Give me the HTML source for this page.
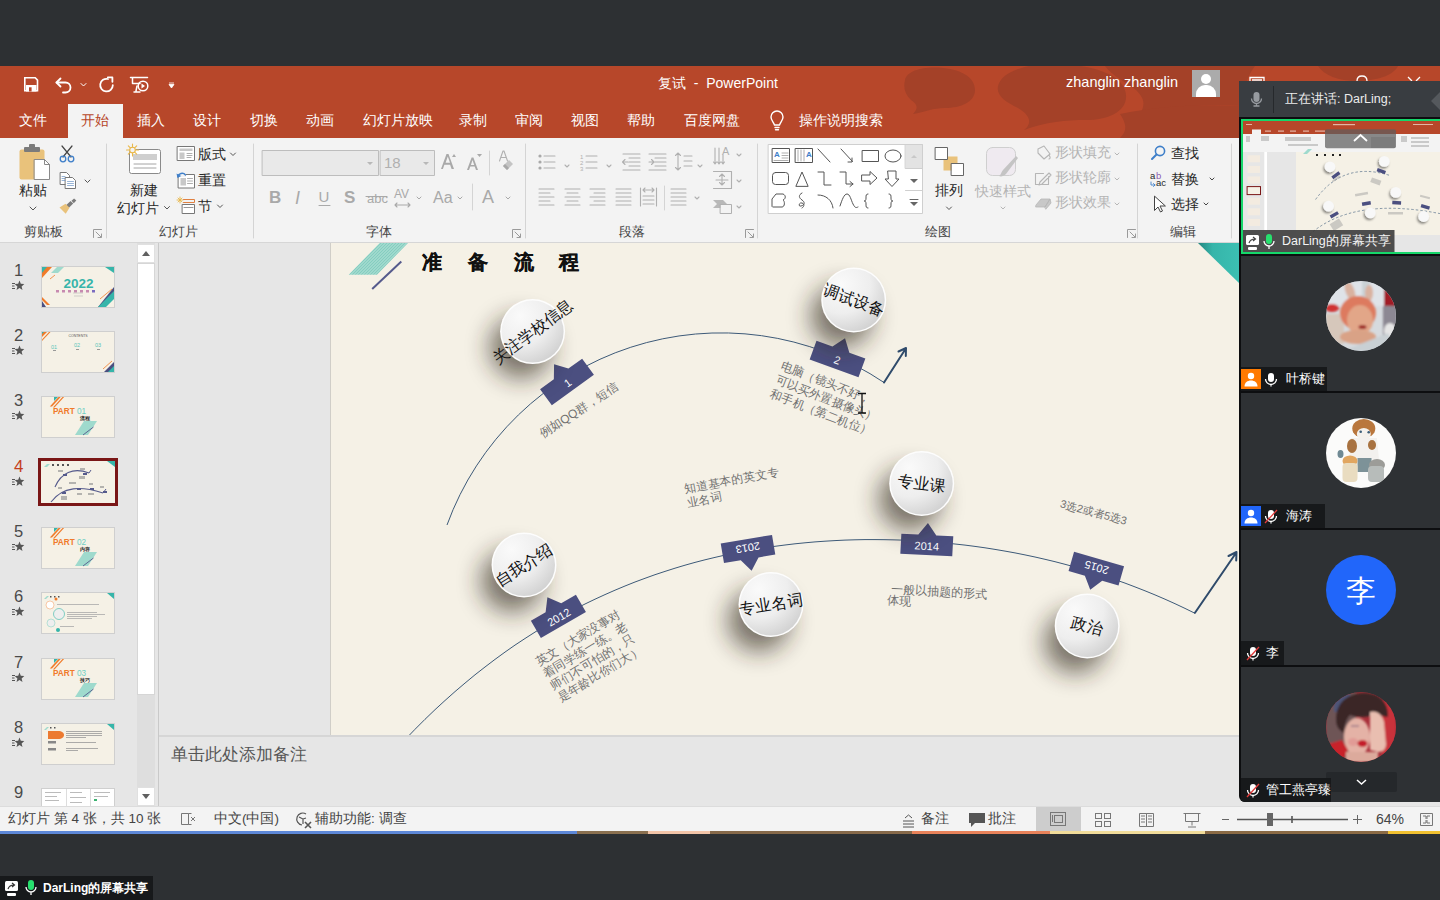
<!DOCTYPE html>
<html><head><meta charset="utf-8">
<style>
*{margin:0;padding:0;box-sizing:border-box}
html,body{width:1440px;height:900px;overflow:hidden;background:#2d3033;font-family:"Liberation Sans",sans-serif;position:relative}
.a{position:absolute}
.t{position:absolute;white-space:nowrap;line-height:1}
#title{left:0;top:66px;width:1440px;height:38px;overflow:hidden}
#tabs{left:0;top:103px;width:1440px;height:35px}
#ribbon{left:0;top:138px;width:1440px;height:105px;background:#f3f3f3;border-bottom:1px solid #d6d6d6}
#main{left:0;top:243px;width:1440px;height:563px;background:#e6e6e6;overflow:hidden}
#status{left:0;top:806px;width:1440px;height:25px;background:#f3f3f3;border-top:1px solid #dcdcdc}
.tab{position:absolute;top:10px;color:#fff;font-size:14px;line-height:1;white-space:nowrap}
.sep{position:absolute;width:1px;background:#d8d8d8}
.glab{position:absolute;top:88px;font-size:13px;color:#444;line-height:1;white-space:nowrap}
.dis{color:#b4b4b4}
</style></head><body>
<!-- TITLE BAR -->
<div class="a" style="left:0;top:66px;width:1440px;height:72px;background:#b7472a;overflow:hidden">
 <svg width="1440" height="72" viewBox="0 66 1440 72"><g fill="#9e3f28" opacity="0.75">
  <path d="M905 80c2-10 20-14 38-12 20 2 32 10 32 22 0 12-14 18-30 18-12 0-20 4-32 6 6-6 4-10-2-14-6-6-8-12-6-20z"/>
  <path d="M998 86c4-16 34-24 64-22 34 2 66 12 64 34-1 14-18 22-40 22-20 0-40 2-62 10 10-8 4-16-6-22-12-6-22-12-20-22z"/>
  <path d="M1105 66h150c-6 8-12 20-14 40-30-2-71 0-101 8 6-10 4-16-4-24-10-8-24-14-31-24z"/><path d="M1318 66h80c-4 8-16 14-40 15-20 0-34-6-40-15z"/>
  <path d="M1120 114c40-8 80-10 120-8v32h-120c6-6 8-12 0-24z"/>
 </g></svg>
</div>

<div id="title" class="a">
  <svg class="a" style="left:0;top:0" width="1440" height="38" viewBox="0 66 1440 38">
   
   <path d="M24.8 77.8h10.4l2.3 2.3v10.6h-12.7z" fill="none" stroke="#fff" stroke-width="1.6"/>
   <rect x="26" y="85" width="10.5" height="6.5" fill="#fff"/>
   <rect x="29" y="87.3" width="2.6" height="4.2" fill="#b7472a"/>
   <g fill="none" stroke="#fff" stroke-width="1.8" stroke-linecap="round" stroke-linejoin="round">
    <path d="M56.5 82.5h9a5 5 0 0 1 0 10h-2.5"/><path d="M60.5 78.5l-4 4 4 4"/>
    <path d="M81 83.5l2.5 2.5 2.5-2.5" stroke-width="1"/>
    <path d="M112.8 85.2A6.3 6.3 0 1 1 108 79"/><path d="M107.8 77.4h4.6v4.4" />
    <path d="M130.5 77.5h17M132.5 77.5v6M133 83.5h7M137 86l-1 5M134 92h6" stroke-width="1.5"/>
    <circle cx="143" cy="86" r="4.8" stroke-width="1.5"/>
   </g>
   <path d="M141.5 83.5v5l3.5-2.5z" fill="#fff"/>
   <path d="M169 83h5M169 84.5h5l-2.5 3.5z" fill="#fff" stroke="#fff" stroke-width="0.8"/>
   <!-- window controls peeking -->
   <g stroke="#fff" stroke-width="1.3" fill="none">
    <path d="M1250 81v-3.5h14v3.5M1252 80h10"/>
    <path d="M1357 81c0-3 2-5 5-5s5 2 5 5"/>
    <path d="M1408 77l4 4M1420 77l-4 4"/>
   </g>
  </svg>
  <div class="t" style="left:658px;top:10px;color:#fff;font-size:14px">复试&nbsp;&nbsp;-&nbsp;&nbsp;PowerPoint</div>
  <div class="t" style="left:1066px;top:9px;color:#fff;font-size:14.5px">zhanglin zhanglin</div>
  <div class="a" style="left:1192px;top:4px;width:28px;height:27px;background:#ababab;overflow:hidden">
    <div class="a" style="left:9px;top:4px;width:10px;height:10px;border-radius:50%;background:#fff"></div>
    <div class="a" style="left:4px;top:15px;width:20px;height:16px;border-radius:9px 9px 0 0;background:#fff"></div>
  </div>
</div>
<!-- TABS -->
<div id="tabs" class="a">
  <svg class="a" style="left:0;top:0" width="1440" height="35" viewBox="0 103 1440 35">
   
   <g fill="none" stroke="#fff" stroke-width="1.4" stroke-linecap="round">
    <path d="M774.5 125c-1-3-3.5-4.5-3.5-8a6 6 0 0 1 12 0c0 3.5-2.5 5-3.5 8z"/>
    <path d="M775 127.5h4M775.5 129.8h3"/>
   </g>
  </svg>
  <div class="tab" style="left:19px">文件</div>
  <div class="a" style="left:68px;top:1px;width:55px;height:34px;background:#f3f3f3"></div>
  <div class="tab" style="left:81px;color:#b7472a">开始</div>
  <div class="tab" style="left:137px">插入</div>
  <div class="tab" style="left:193px">设计</div>
  <div class="tab" style="left:250px">切换</div>
  <div class="tab" style="left:306px">动画</div>
  <div class="tab" style="left:363px">幻灯片放映</div>
  <div class="tab" style="left:459px">录制</div>
  <div class="tab" style="left:515px">审阅</div>
  <div class="tab" style="left:571px">视图</div>
  <div class="tab" style="left:627px">帮助</div>
  <div class="tab" style="left:684px">百度网盘</div>
  <div class="tab" style="left:799px">操作说明搜索</div>
</div>
<!-- RIBBON -->
<div id="ribbon" class="a">
<svg class="a" style="left:0;top:0" width="1440" height="104" viewBox="0 138 1440 104" fill="none" stroke-linecap="round" stroke-linejoin="round">
 <!-- separators -->
 <g stroke="#d4d4d4" stroke-width="1">
  <line x1="106.5" y1="144" x2="106.5" y2="238"/><line x1="253.5" y1="144" x2="253.5" y2="238"/>
  <line x1="525.5" y1="144" x2="525.5" y2="238"/><line x1="757.5" y1="144" x2="757.5" y2="238"/>
  <line x1="1137.5" y1="144" x2="1137.5" y2="238"/><line x1="1231.5" y1="144" x2="1231.5" y2="238"/>
  <line x1="489.5" y1="151" x2="489.5" y2="175"/><line x1="472.5" y1="184" x2="472.5" y2="210"/>
  <line x1="664.5" y1="186" x2="664.5" y2="210"/>
 </g>
 <!-- dialog launchers -->
 <g stroke="#9a9a9a" stroke-width="1">
  <path d="M93.5 237.5v-8h8M96 232l5 5M101.5 234v3.5h-3.5"/>
  <path d="M512.5 237.5v-8h8M515 232l5 5M520.5 234v3.5h-3.5"/>
  <path d="M745.5 237.5v-8h8M748 232l5 5M753.5 234v3.5h-3.5"/>
  <path d="M1127.5 237.5v-8h8M1130 232l5 5M1135.5 234v3.5h-3.5"/>
 </g>
 <!-- paste -->
 <rect x="19.5" y="149.5" width="25" height="30" rx="2" fill="#e9c27b" stroke="none"/>
 <rect x="24" y="147" width="16" height="5" rx="1" fill="#7b7b7b"/>
 <rect x="29" y="144" width="6" height="5" rx="1" fill="#7b7b7b"/>
 <path d="M34.5 159.5h10l5 5v15h-15z" fill="#fff" stroke="#8a8a8a"/>
 <path d="M44.5 159.5v5h5" stroke="#8a8a8a"/>
 <!-- scissors -->
 <g stroke="#444" stroke-width="1.2"><path d="M62 146l9 11M72 146l-9 11"/></g>
 <g stroke="#3f7fc9" stroke-width="1.3"><circle cx="63" cy="159" r="2.8"/><circle cx="71" cy="159" r="2.8"/></g>
 <!-- copy -->
 <path d="M60.5 172.5h6l3 3v9h-9z" fill="#fff" stroke="#777"/>
 <path d="M65.5 177.5h7l3 3v8h-10z" fill="#fff" stroke="#777"/>
 <g stroke="#6b93c4" stroke-width="0.7"><path d="M62 176.5h3M62 178.5h3M62 180.5h3M67.5 181.5h6M67.5 183.5h6M67.5 185.5h6"/></g>
 <!-- format painter -->
 <path d="M71.5 200.8l2.6-2.4 2.2 2.2-2.5 2.6z" fill="#7b7b7b" stroke="none"/>
 <path d="M66 205.2l4.6-4.3 2.6 2.7-4.5 4.4z" fill="#7b7b7b" stroke="none"/>
 <path d="M59.5 207.5l6-3.8 4 4-3.8 6z" fill="#e9c27b" stroke="none"/>
 <!-- chevrons -->
 <g stroke="#555" stroke-width="1"><path d="M30 207l3 3 3-3M85 180l2.5 2.5 2.5-2.5M164.5 206.5l2.5 2.5 2.5-2.5M230.5 153l2.5 2.5 2.5-2.5M217.5 205l2.5 2.5 2.5-2.5M946.5 207l2.5 2.5 2.5-2.5"/></g>
 <!-- new slide -->
 <rect x="129.5" y="149.5" width="31" height="24" rx="2" fill="#fff" stroke="#8a8a8a"/>
 <rect x="133" y="154" width="24" height="6" fill="#cfcfcf" stroke="none"/>
 <g stroke="#9a9a9a" stroke-width="0.9"><path d="M134 164h22M134 168h22"/></g>
 <g stroke="#e9b84a" stroke-width="1.1"><path d="M132.5 144v12M126.5 150h12M128.3 145.8l8.4 8.4M136.7 145.8l-8.4 8.4"/></g>
 <circle cx="132.5" cy="150" r="2.8" fill="#f3f3f3" stroke="#e9b84a" stroke-width="1.1"/>
 <!-- layout -->
 <rect x="177.5" y="146.5" width="17" height="14" fill="#fff" stroke="#777"/>
 <rect x="179.5" y="148.5" width="13" height="2.5" fill="#c8c8c8" stroke="none"/>
 <rect x="179.5" y="152.5" width="5" height="6.5" fill="#c8c8c8" stroke="none"/>
 <g stroke="#999" stroke-width="0.8"><path d="M187 153.5h5M187 155.5h5M187 157.5h4"/></g>
 <!-- reset -->
 <rect x="178.5" y="174.5" width="16" height="13.5" fill="#fff" stroke="#777"/>
 <rect x="180.5" y="178" width="5.5" height="7.5" fill="#c8c8c8" stroke="none"/>
 <g stroke="#999" stroke-width="0.8"><path d="M187.5 178.5h5M187.5 181h5M187.5 183.5h5"/></g>
 <rect x="176" y="172" width="10" height="5" fill="#f3f3f3" stroke="none"/>
 <path d="M178 176.5c0.5-3 5-4.5 7.5-1.5" stroke="#3f7fc9" stroke-width="1.5"/>
 <path d="M176.5 173.5l1 4.5 3.8-2z" fill="#3f7fc9" stroke="none"/>
 <!-- section -->
 <g stroke="#e9b84a" stroke-width="0.9"><path d="M180 197v6M177 200h6M178 198l4 4M182 198l-4 4"/></g>
 <path d="M183.5 199.5h11v3h-11" stroke="#e08040"/>
 <rect x="182.5" y="204.5" width="12" height="9" fill="#fff" stroke="#777"/>
 <path d="M184 207.5h9" stroke="#999"/>
</svg>
<div class="t" style="left:19px;top:45px;font-size:14px;color:#262626">粘贴</div>
<div class="t" style="left:24px;top:87px;font-size:13px;color:#444">剪贴板</div>
<div class="t" style="left:130px;top:45px;font-size:14px;color:#262626">新建</div>
<div class="t" style="left:117px;top:63px;font-size:14px;color:#262626">幻灯片</div>
<div class="t" style="left:159px;top:87px;font-size:13px;color:#444">幻灯片</div>
<div class="t" style="left:198px;top:9px;font-size:14px;color:#262626">版式</div>
<div class="t" style="left:198px;top:35px;font-size:14px;color:#262626">重置</div>
<div class="t" style="left:198px;top:61px;font-size:14px;color:#262626">节</div>
<svg class="a" style="left:0;top:0" width="1440" height="104" viewBox="0 138 1440 104" fill="none" stroke-linecap="round" stroke-linejoin="round">
 <!-- font boxes -->
 <rect x="262.5" y="150.5" width="116" height="25" fill="#e9e9e9" stroke="#bdbdbd"/>
 <rect x="380.5" y="150.5" width="54" height="25" fill="#e9e9e9" stroke="#bdbdbd"/>
 <path d="M367 162l3 3 3-3z M423 162l3 3 3-3z" fill="#b8b8b8" stroke="none"/>
 <!-- grow/shrink -->
 <g fill="#a9a9a9" stroke="none">
  <path d="M441 169l5.5-15h2l5.5 15h-2.4l-1.5-4.2h-5.7l-1.5 4.2zm4.6-6.2h4.4l-2.2-6.3z"/>
  <path d="M452 157l2-3 2 3z"/>
  <path d="M467 170l4.6-12.5h1.8l4.6 12.5h-2l-1.3-3.5h-4.4l-1.3 3.5zm3.9-5.1h3.3l-1.7-4.8z"/>
  <path d="M477 154h5l-2.5 3z"/>
 </g>
 <!-- clear format -->
 <path d="M499.5 161l3.5-10h1l3.5 10M501 157.5h5" stroke="#b0b0b0" stroke-width="1.1"/>
 <path d="M503 166l6-6 4 4-6 6z" fill="#c4c4c4" stroke="none"/><path d="M503 166l2-2 4 4-2 2z" fill="#a8a8a8" stroke="none"/>
 <!-- row 2 -->
 <g fill="#a9a9a9" stroke="none" font-family="Liberation Sans" >
  <text x="269" y="203" font-size="17" font-weight="bold">B</text>
  <text x="295" y="203.5" font-size="18" font-style="italic">I</text>
  <text x="318.5" y="202" font-size="15">U</text>
  <text x="344" y="203" font-size="17" font-weight="bold">S</text>
  <text x="367" y="203" font-size="13">abc</text>
  <text x="394" y="198" font-size="12">AV</text>
  <text x="433" y="203" font-size="16">Aa</text>
  <text x="482" y="203" font-size="18">A</text>
 </g>
 <g stroke="#a9a9a9" stroke-width="1.1"><path d="M319 205.5h11M366 196.5h21M395 205h15M397 203l-2 2 2 2M408 203l2 2-2 2"/></g>
 <g stroke="#a9a9a9" stroke-width="1"><path d="M417 197l2 2 2-2M458 197l2 2 2-2M506 197l2 2 2-2"/></g>
 <!-- paragraph row 1 -->
 <g fill="#a9a9a9" stroke="none"><circle cx="540" cy="156" r="1.6"/><circle cx="540" cy="162" r="1.6"/><circle cx="540" cy="168" r="1.6"/></g>
 <g stroke="#b0b0b0" stroke-width="1.1">
  <path d="M544 156h11M544 162h11M544 168h11"/>
  <path d="M586 156h11M586 162h11M586 168h11"/>
  <path d="M623 154h17M629 158h11M629 162h11M629 166h11M623 170h17M628 162h-5M625 159.5l-2.5 2.5 2.5 2.5"/>
  <path d="M649 154h17M655 158h11M655 162h11M655 166h11M649 170h17M649 162h5M651.5 159.5l2.5 2.5-2.5 2.5"/>
  <path d="M684 156h8M684 161h8M684 166h8M678 153v17M675.5 155.5l2.5-2.5 2.5 2.5M675.5 167.5l2.5 2.5 2.5-2.5"/>
  <path d="M715 148v16M719 148v16M723 155v9M713.5 162l1.5 2 1.5-2M717.5 162l1.5 2 1.5-2M721.5 162l1.5 2 1.5-2"/>
  <path d="M565 165l2 2 2-2M607 165l2 2 2-2M698 165l2 2 2-2M737 154l2 2 2-2M737 180l2 2 2-2M737 206l2 2 2-2M695 197l2 2 2-2"/>
 </g>
 <g fill="#b0b0b0" stroke="none" font-family="Liberation Sans" font-size="6"><text x="580" y="159">1</text><text x="580" y="165">2</text><text x="580" y="171">3</text></g>
 <text x="722" y="155" font-family="Liberation Sans" font-size="11" fill="#b0b0b0">A</text>
 <!-- align row -->
 <g stroke="#b0b0b0" stroke-width="1.1">
  <path d="M539 189h15M539 193h11M539 197h15M539 201h11M539 205h15"/>
  <path d="M565 189h15M567 193h11M565 197h15M567 201h11M565 205h15"/>
  <path d="M590 189h15M594 193h11M590 197h15M594 201h11M590 205h15"/>
  <path d="M616 189h15M616 193h15M616 197h15M616 201h15M616 205h15"/>
  <path d="M640.5 188v18M656.5 188v18M643 190h11M645 188l-2 2 2 2M652 188l2 2-2 2M643 196h11M643 200h11M643 204h11"/>
  <path d="M671 189h15M671 193h15M671 197h15M671 201h15M671 205h15"/>
  <path d="M713.5 171.5h18v17h-18M722 174v11M719.5 176.5l2.5-2.5 2.5 2.5M719.5 182.5l2.5 2.5 2.5-2.5M716 180h12"/>
 </g>
 <path d="M713 200h10l4 4-4 4h-10l4-4z" fill="#b8b8b8" stroke="none"/>
 <rect x="720.5" y="204.5" width="11" height="9" fill="#f3f3f3" stroke="#b0b0b0"/>
 <!-- shapes gallery -->
 <rect x="768.5" y="144.5" width="154" height="69" fill="#fff" stroke="#cfcfcf"/>
 <rect x="905.5" y="144.5" width="17" height="24" fill="#e3e3e3" stroke="#cfcfcf"/>
 <path d="M905.5 190.5h17" stroke="#cfcfcf"/>
 <path d="M911 158l3-3 3 3z" fill="#c8c8c8" stroke="none"/>
 <path d="M910 179h8l-4 4z M910 202h8l-4 4z" fill="#666" stroke="none"/>
 <path d="M910 199.5h8" stroke="#666"/>
 <g stroke="#555" stroke-width="1">
  <rect x="772.5" y="148.5" width="17" height="14" fill="#fff"/>
  <rect x="795.5" y="148.5" width="17" height="14" fill="#fff"/>
  <path d="M818 149l12 13M841 149l11.5 12.5"/>
  <path d="M852 158v4h-4" />
  <rect x="862.5" y="150.5" width="16" height="11"/>
  <ellipse cx="893" cy="156" rx="8" ry="6"/>
  <rect x="772.5" y="172.5" width="16" height="12" rx="3"/>
  <path d="M796 186l6-14 6 14z"/>
  <path d="M818 172h6v13h7"/>
  <path d="M840 172h6v12h7M850 181.5l3 2.5-3 2.5"/>
  <path d="M862 175h8v-3.5l7 6.5-7 6.5v-3.5h-8z"/>
  <path d="M888 171h8v8h3l-7 7.5-7-7.5h3z"/>
  <path d="M772 206v-7l4-5h7c3 1 3 5 0 6 2 1 2 7-1 7h-9z"/>
  <path d="M802 193c-4 2-3 5 0 7s3 5-1 6c-3 1-2-4 1-3s2 4 0 5"/>
  <path d="M818 195c8 0 14 5 15 13"/>
  <path d="M840 206c2-6 4-12 7-12s4 6 6 10 3 4 5 3"/>
  <path d="M868 194c-2 0-2 1-2 4s-1 3-2 3c1 0 2 0 2 3s0 4 2 4"/>
  <path d="M889 194c2 0 2 1 2 4s1 3 2 3c-1 0-2 0-2 3s0 4-2 4"/>
 </g>
 <g stroke="#9a9a9a" stroke-width="0.8"><path d="M782 153h6M782 155.5h6M782 158h6M774 160.5h14M798 150v11M801 150v11M804 150v11"/></g>
 <g fill="#3f7fc9" stroke="none" font-family="Liberation Sans" font-size="8" font-weight="bold"><text x="774" y="157">A</text><text x="806" y="157">A</text></g>
 <!-- arrange -->
 <rect x="943.5" y="156.5" width="14" height="14" fill="#e9c27b" stroke="none"/>
 <rect x="935.5" y="147.5" width="12" height="12" fill="#fff" stroke="#666"/>
 <rect x="951.5" y="163.5" width="12" height="12" fill="#fff" stroke="#666"/>
 <!-- quick styles (disabled) -->
 <rect x="986.5" y="147.5" width="29" height="28" rx="6" fill="#efeaf0" stroke="#cfcfcf"/>
 <path d="M1018 158l-12 16c-2 2-5 3-7 2 2-1 2-4 4-6l13-14z" fill="#c4c4c4" stroke="none"/>
 <!-- shape fill/outline/effects -->
 <g stroke="#b6b6b6" stroke-width="1.1">
  <path d="M1038 149l6-3 6 8-6 5-6-6z M1049 155c1 2 2 3 0 4"/>
  <path d="M1035.5 173.5h8M1035.5 173.5v11h13v-8M1040 182l9-9 2 2-9 9-3 1z"/>
 </g>
 <path d="M1036 205l5-6h9l-5 8h-9z M1045 207l5-8 1 4-5 6z" fill="#c8c8c8" stroke="#b6b6b6" stroke-width="0.8"/>
 <g stroke="#b6b6b6" stroke-width="1"><path d="M1115 153l2 2 2-2M1115 178l2 2 2-2M1115 203l2 2 2-2M1001 207l2 2 2-2"/></g>
 <!-- find -->
 <circle cx="1160" cy="151" r="4.6" stroke="#3f7fc9" stroke-width="1.6"/>
 <path d="M1156.5 154.5l-4.5 4.5" stroke="#3f7fc9" stroke-width="2"/>
 <!-- replace -->
 <g font-family="Liberation Sans" font-size="9.5" stroke="none"><text x="1150" y="179" fill="#262626">a</text><text x="1156" y="179" fill="#8d5bb0">b</text><text x="1156" y="186" fill="#262626">ac</text></g>
 <path d="M1151 182v3h4M1153.5 183.5l1.5 1.5-1.5 1.5" stroke="#3f7fc9" stroke-width="0.9"/>
 <!-- select -->
 <path d="M1154.5 196.5v14l3.5-3.5 2.5 5 2-1-2.5-5h5z" fill="#fff" stroke="#444"/>
 <g stroke="#444" stroke-width="1"><path d="M1210 178l2 2 2-2M1204 203l2 2 2-2"/></g>
</svg>
<div class="t" style="left:384px;top:17px;font-size:15px;color:#b0b0b0">18</div>
<div class="t" style="left:366px;top:87px;font-size:13px;color:#444">字体</div>
<div class="t" style="left:619px;top:87px;font-size:13px;color:#444">段落</div>
<div class="t" style="left:935px;top:45px;font-size:14px;color:#262626">排列</div>
<div class="t" style="left:925px;top:87px;font-size:13px;color:#444">绘图</div>
<div class="t" style="left:975px;top:47px;font-size:13.5px;color:#b4b4b4">快速样式</div>
<div class="t" style="left:1055px;top:8px;font-size:13.5px;color:#b4b4b4">形状填充</div>
<div class="t" style="left:1055px;top:33px;font-size:13.5px;color:#b4b4b4">形状轮廓</div>
<div class="t" style="left:1055px;top:58px;font-size:13.5px;color:#b4b4b4">形状效果</div>
<div class="t" style="left:1171px;top:8px;font-size:14px;color:#262626">查找</div>
<div class="t" style="left:1171px;top:34px;font-size:14px;color:#262626">替换</div>
<div class="t" style="left:1171px;top:59px;font-size:14px;color:#262626">选择</div>
<div class="t" style="left:1170px;top:87px;font-size:13px;color:#444">编辑</div>
</div>
<!-- MAIN -->
<div id="main" class="a">
<!-- thumbnails -->
<div class="t" style="left:14px;top:19px;font-size:16.5px;color:#4a4a4a">1</div>
<svg class="a" style="left:11px;top:37px" width="14" height="12" viewBox="0 0 14 12"><path d="M8.5 0.5l1.3 3.3 3.5.3-2.7 2.3.9 3.5-3-1.9-3 1.9.9-3.5-2.7-2.3 3.5-.3z" fill="#555"/><path d="M1 3.5h3M1 6h2.5M1 8.5h3" stroke="#555" stroke-width="1"/></svg>
<div class="t" style="left:14px;top:84px;font-size:16.5px;color:#4a4a4a">2</div>
<svg class="a" style="left:11px;top:102px" width="14" height="12" viewBox="0 0 14 12"><path d="M8.5 0.5l1.3 3.3 3.5.3-2.7 2.3.9 3.5-3-1.9-3 1.9.9-3.5-2.7-2.3 3.5-.3z" fill="#555"/><path d="M1 3.5h3M1 6h2.5M1 8.5h3" stroke="#555" stroke-width="1"/></svg>
<div class="t" style="left:14px;top:149px;font-size:16.5px;color:#4a4a4a">3</div>
<svg class="a" style="left:11px;top:167px" width="14" height="12" viewBox="0 0 14 12"><path d="M8.5 0.5l1.3 3.3 3.5.3-2.7 2.3.9 3.5-3-1.9-3 1.9.9-3.5-2.7-2.3 3.5-.3z" fill="#555"/><path d="M1 3.5h3M1 6h2.5M1 8.5h3" stroke="#555" stroke-width="1"/></svg>
<div class="t" style="left:14px;top:215px;font-size:17px;color:#c43e1c">4</div>
<svg class="a" style="left:11px;top:233px" width="14" height="12" viewBox="0 0 14 12"><path d="M8.5 0.5l1.3 3.3 3.5.3-2.7 2.3.9 3.5-3-1.9-3 1.9.9-3.5-2.7-2.3 3.5-.3z" fill="#555"/><path d="M1 3.5h3M1 6h2.5M1 8.5h3" stroke="#555" stroke-width="1"/></svg>
<div class="t" style="left:14px;top:280px;font-size:16.5px;color:#4a4a4a">5</div>
<svg class="a" style="left:11px;top:298px" width="14" height="12" viewBox="0 0 14 12"><path d="M8.5 0.5l1.3 3.3 3.5.3-2.7 2.3.9 3.5-3-1.9-3 1.9.9-3.5-2.7-2.3 3.5-.3z" fill="#555"/><path d="M1 3.5h3M1 6h2.5M1 8.5h3" stroke="#555" stroke-width="1"/></svg>
<div class="t" style="left:14px;top:345px;font-size:16.5px;color:#4a4a4a">6</div>
<svg class="a" style="left:11px;top:363px" width="14" height="12" viewBox="0 0 14 12"><path d="M8.5 0.5l1.3 3.3 3.5.3-2.7 2.3.9 3.5-3-1.9-3 1.9.9-3.5-2.7-2.3 3.5-.3z" fill="#555"/><path d="M1 3.5h3M1 6h2.5M1 8.5h3" stroke="#555" stroke-width="1"/></svg>
<div class="t" style="left:14px;top:411px;font-size:16.5px;color:#4a4a4a">7</div>
<svg class="a" style="left:11px;top:429px" width="14" height="12" viewBox="0 0 14 12"><path d="M8.5 0.5l1.3 3.3 3.5.3-2.7 2.3.9 3.5-3-1.9-3 1.9.9-3.5-2.7-2.3 3.5-.3z" fill="#555"/><path d="M1 3.5h3M1 6h2.5M1 8.5h3" stroke="#555" stroke-width="1"/></svg>
<div class="t" style="left:14px;top:476px;font-size:16.5px;color:#4a4a4a">8</div>
<svg class="a" style="left:11px;top:494px" width="14" height="12" viewBox="0 0 14 12"><path d="M8.5 0.5l1.3 3.3 3.5.3-2.7 2.3.9 3.5-3-1.9-3 1.9.9-3.5-2.7-2.3 3.5-.3z" fill="#555"/><path d="M1 3.5h3M1 6h2.5M1 8.5h3" stroke="#555" stroke-width="1"/></svg>
<div class="t" style="left:14px;top:541px;font-size:16.5px;color:#4a4a4a">9</div>

<div class="a" style="left:41px;top:23px;width:74px;height:42px;background:#f5f1e6;border:1px solid #cfcfcf;overflow:hidden" id="th1"><svg width="72" height="40" viewBox="0 0 72 40" style="position:absolute;left:0;top:0" font-family="Liberation Sans, sans-serif"><path d="M0 0h8l-8 8z" fill="#36b5aa"/><path d="M5 0h5l-10 11v-5z" fill="#f07b2a"/><path d="M8 12l5-4" stroke="#f07b2a" stroke-width="0.8"/>
<path d="M15 0h7l-6 6h-7z" fill="#9fdacd"/><path d="M63 0h9v6z" fill="#36b5aa"/>
<text x="36.5" y="20.5" font-size="13.5" font-weight="bold" fill="#36b5aa" text-anchor="middle">2022</text>
<g fill="#c78ab0" transform="translate(0 1)"><rect x="14" y="22" width="3" height="2.5"/><rect x="20" y="22" width="3" height="2.5"/><rect x="26" y="22" width="3" height="2.5"/><rect x="32" y="22" width="3" height="2.5"/><rect x="38" y="22" width="3" height="2.5"/><rect x="44" y="22" width="3" height="2.5"/><rect x="50" y="22" width="3" height="2.5" fill="#7b6cc0"/></g>
<path d="M31 26h10M32 29h9" stroke="#aaa" stroke-width="0.5"/>
<path d="M0 30l8 8h-3l-5-5z" fill="#f07b2a"/><path d="M0 34l4 6h-4z" fill="#4b4f80"/>
<path d="M72 20v10l-10 10h-6z" fill="#4b4f80"/><path d="M72 24v8l-8 8h-8z" fill="#36b5aa"/><path d="M58 32l12-10" stroke="#f07b2a" stroke-width="0.8"/></svg></div>
<div class="a" style="left:41px;top:88px;width:74px;height:42px;background:#f5f1e6;border:1px solid #cfcfcf;overflow:hidden" id="th2"><svg width="72" height="40" viewBox="0 0 72 40" style="position:absolute;left:0;top:0" font-family="Liberation Sans, sans-serif"><path d="M0 0h4l-4 4z" fill="#36b5aa"/><path d="M2 0h3l-5 5v-3z" fill="#f07b2a"/><path d="M7 0h1.5l-8.5 9v-1.5z" fill="#f07b2a"/>
<text x="36" y="4.5" font-size="3.5" fill="#555" text-anchor="middle">CONTENTS</text>
<g font-size="5.5" fill="#5ac6ba"><text x="9" y="17">01</text><text x="32" y="15">02</text><text x="53" y="15">03</text></g>
<g fill="#999"><rect x="11" y="18" width="3" height="1"/><rect x="34" y="17" width="3" height="1"/><rect x="55" y="17" width="3" height="1"/></g>
<path d="M72 30v6l-4 4h-6z" fill="#4b4f80"/><path d="M72 34v6h-6z" fill="#36b5aa"/><path d="M61 37l9-8" stroke="#f07b2a" stroke-width="0.8"/></svg></div>
<div class="a" style="left:41px;top:153px;width:74px;height:42px;background:#f5f1e6;border:1px solid #cfcfcf;overflow:hidden" id="th3"><svg width="72" height="40" viewBox="0 0 72 40" style="position:absolute;left:0;top:0" font-family="Liberation Sans, sans-serif"><path d="M12 0h4l-4 4z" fill="#36b5aa"/><path d="M16.5 0h2.2l-8.7 9.5h-2.2z" fill="#f07b2a"/><path d="M20.5 0h1.6l-9.6 10.5h-1.6z" fill="#f07b2a"/>
<text x="11" y="17" font-size="8.2" font-weight="bold" fill="#f07b2a">PART</text><text x="35" y="17" font-size="8.2" fill="#6fcfc3">01</text>
<text x="38" y="22.5" font-size="5" font-weight="bold" fill="#222">流程</text>
<path d="M42 24h13l-9 14h-13z" fill="#9fdacd"/><path d="M41 38l10.5-8" stroke="#555a8c" stroke-width="0.9"/></svg></div>
<div class="a" style="left:38px;top:215px;width:80px;height:48px;border:3px solid #7a1616;background:#f5f1e6;overflow:hidden" id="th4"><svg width="74" height="42" viewBox="0 0 74 42" style="position:absolute;left:0;top:0"><path d="M3 6l3-3h3l-3 3z" fill="#9fdacd"/><g fill="#555"><rect x="11" y="3" width="2" height="2"/><rect x="16" y="3" width="2" height="2"/><rect x="21" y="3" width="2" height="2"/><rect x="26" y="3" width="2" height="2"/></g><path d="M66 0h8v6z" fill="#36b5aa"/><g fill="none" stroke="#555a8c" stroke-width="1.1"><path d="M14 26c6-14 18-20 34-14"/><path d="M10 41c12-16 30-16 52-9"/></g><g fill="#555a8c"><rect x="22" y="13" width="4" height="2"/><rect x="42" y="12" width="4" height="2"/><rect x="21" y="31" width="4" height="2"/><rect x="36" y="27" width="4" height="2"/><rect x="49" y="27" width="4" height="2"/><rect x="62" y="30" width="4" height="2"/></g><path d="M48 12l2-3M62 32l3-4" stroke="#555a8c" stroke-width="1"/><g fill="#999" opacity="0.7"><rect x="17" y="9" width="5" height="2"/><rect x="39" y="7" width="5" height="2"/><rect x="38" y="15" width="6" height="3"/><rect x="28" y="21" width="7" height="2"/><rect x="48" y="22" width="4" height="2"/><rect x="17" y="26" width="4" height="2"/><rect x="20" y="35" width="6" height="4"/><rect x="36" y="32" width="5" height="2"/><rect x="47" y="32" width="6" height="2"/><rect x="59" y="25" width="4" height="2"/></g></svg></div>
<div class="a" style="left:41px;top:284px;width:74px;height:42px;background:#f5f1e6;border:1px solid #cfcfcf;overflow:hidden" id="th5"><svg width="72" height="40" viewBox="0 0 72 40" style="position:absolute;left:0;top:0" font-family="Liberation Sans, sans-serif"><path d="M12 0h4l-4 4z" fill="#36b5aa"/><path d="M16.5 0h2.2l-8.7 9.5h-2.2z" fill="#f07b2a"/><path d="M20.5 0h1.6l-9.6 10.5h-1.6z" fill="#f07b2a"/>
<text x="11" y="17" font-size="8.2" font-weight="bold" fill="#f07b2a">PART</text><text x="35" y="17" font-size="8.2" fill="#6fcfc3">02</text>
<text x="38" y="22.5" font-size="5" font-weight="bold" fill="#222">内容</text>
<path d="M42 24h13l-9 14h-13z" fill="#9fdacd"/><path d="M41 38l10.5-8" stroke="#555a8c" stroke-width="0.9"/></svg></div>
<div class="a" style="left:41px;top:349px;width:74px;height:42px;background:#f5f1e6;border:1px solid #cfcfcf;overflow:hidden" id="th6"><svg width="72" height="40" viewBox="0 0 72 40" style="position:absolute;left:0;top:0" font-family="Liberation Sans, sans-serif"><path d="M2 6l3-3h2l-3 3z" fill="#9fdacd"/><g fill="#555"><rect x="8" y="3" width="1.5" height="1.5"/><rect x="12" y="3" width="1.5" height="1.5"/><rect x="16" y="3" width="1.5" height="1.5"/></g><path d="M65 0h7v6z" fill="#36b5aa"/>
<circle cx="14" cy="6" r="1.5" fill="#f07b2a"/><circle cx="8" cy="12" r="4" fill="#fff" stroke="#f07b2a" stroke-width="0.4"/><circle cx="17" cy="21" r="5.5" fill="#eee" stroke="#36b5aa" stroke-width="0.6"/><circle cx="9" cy="30" r="4" fill="#eee" stroke="#8fd3c6" stroke-width="0.6"/><circle cx="16" cy="37" r="2" fill="#36b5aa"/>
<g fill="#aaa"><rect x="15" y="11" width="42" height="0.8"/><rect x="25" y="19" width="30" height="0.8"/><rect x="25" y="21" width="38" height="0.8"/><rect x="25" y="23" width="30" height="0.8"/><rect x="25" y="25" width="25" height="0.8"/><rect x="18" y="33" width="14" height="0.8"/></g></svg></div>
<div class="a" style="left:41px;top:415px;width:74px;height:42px;background:#f5f1e6;border:1px solid #cfcfcf;overflow:hidden" id="th7"><svg width="72" height="40" viewBox="0 0 72 40" style="position:absolute;left:0;top:0" font-family="Liberation Sans, sans-serif"><path d="M12 0h4l-4 4z" fill="#36b5aa"/><path d="M16.5 0h2.2l-8.7 9.5h-2.2z" fill="#f07b2a"/><path d="M20.5 0h1.6l-9.6 10.5h-1.6z" fill="#f07b2a"/>
<text x="11" y="17" font-size="8.2" font-weight="bold" fill="#f07b2a">PART</text><text x="35" y="17" font-size="8.2" fill="#6fcfc3">03</text>
<text x="38" y="22.5" font-size="5" font-weight="bold" fill="#222">技巧</text>
<path d="M42 24h13l-9 14h-13z" fill="#9fdacd"/><path d="M41 38l10.5-8" stroke="#555a8c" stroke-width="0.9"/></svg></div>
<div class="a" style="left:41px;top:480px;width:74px;height:42px;background:#f5f1e6;border:1px solid #cfcfcf;overflow:hidden" id="th8"><svg width="72" height="40" viewBox="0 0 72 40" style="position:absolute;left:0;top:0" font-family="Liberation Sans, sans-serif"><path d="M2 6l3-3h2l-3 3z" fill="#9fdacd"/><g fill="#555"><rect x="8" y="3" width="1.5" height="1.5"/><rect x="12" y="3" width="1.5" height="1.5"/></g><path d="M65 0h7v6z" fill="#36b5aa"/>
<path d="M6 7h10c4 0 6 2 6 4s-2 4-6 4h-10z" fill="#ec7a30"/><rect x="6" y="17" width="8" height="2.5" fill="#888"/><rect x="6" y="24" width="8" height="2.5" fill="#888"/>
<g fill="#999"><rect x="24" y="7" width="36" height="0.8"/><rect x="24" y="9" width="36" height="0.8"/><rect x="24" y="11" width="36" height="0.8"/><rect x="24" y="13" width="20" height="0.8"/><rect x="24" y="18" width="30" height="0.8"/><rect x="24" y="24" width="32" height="0.8"/><rect x="24" y="26" width="12" height="0.8"/></g></svg></div>
<div class="a" style="left:41px;top:545px;width:74px;height:42px;background:#fff;border:1px solid #cfcfcf;overflow:hidden" id="th9"><svg width="72" height="40" viewBox="0 0 72 40" style="position:absolute;left:0;top:0" font-family="Liberation Sans, sans-serif"><rect x="0" y="0" width="72" height="40" fill="#fff"/><rect x="24" y="0" width="1" height="40" fill="#ddd"/><rect x="48" y="0" width="1" height="40" fill="#ddd"/>
<g fill="#bbb"><rect x="3" y="3" width="16" height="1"/><rect x="3" y="7" width="12" height="1"/><rect x="3" y="11" width="14" height="1"/><rect x="28" y="3" width="12" height="1"/><rect x="28" y="8" width="16" height="1"/><rect x="28" y="13" width="12" height="1"/><rect x="52" y="3" width="16" height="1"/><rect x="52" y="7" width="14" height="1"/></g>
<rect x="52" y="10" width="3" height="2" fill="#3cb371"/></svg></div>
<!-- scrollbar -->
<div class="a" style="left:137px;top:0;width:18px;height:564px;background:#dedede"></div>
<div class="a" style="left:137px;top:1px;width:18px;height:19px;background:#fff;border:1px solid #e0e0e0"></div>
<svg class="a" style="left:137px;top:1px" width="18" height="19"><path d="M5 12h8l-4-5z" fill="#606060"/></svg>
<div class="a" style="left:137px;top:20px;width:18px;height:432px;background:#fff;border:1px solid #d6d6d6"></div>
<div class="a" style="left:137px;top:544px;width:18px;height:19px;background:#fff;border:1px solid #e0e0e0"></div>
<svg class="a" style="left:137px;top:544px" width="18" height="19"><path d="M5 7h8l-4 5z" fill="#606060"/></svg>
<div class="a" style="left:158px;top:0;width:1px;height:564px;background:#c9c9c9"></div>
<!-- slide -->
<div class="a" id="slide" style="left:330px;top:0px;width:1110px;height:492px;background:#f5f1e6;overflow:hidden"><svg class="a" style="left:0;top:0" width="1110" height="492" viewBox="330 243 1110 492" font-family="Liberation Sans, sans-serif">
<defs>
<radialGradient id="cg" cx="0.3" cy="0.25" r="0.85"><stop offset="0" stop-color="#fafafa"/><stop offset="0.55" stop-color="#eeeeee"/><stop offset="1" stop-color="#cfcfcf"/></radialGradient>
<filter id="blur" x="-100%" y="-100%" width="300%" height="300%"><feGaussianBlur stdDeviation="12"/></filter>
<pattern id="hatch" width="3" height="3" patternUnits="userSpaceOnUse"><rect width="3" height="3" fill="#9fd9cd"/><path d="M0 3L3 0" stroke="#7fcabd" stroke-width="0.8"/></pattern>
<linearGradient id="teal" x1="0" y1="0" x2="1" y2="0"><stop offset="0" stop-color="#23857f"/><stop offset="0.35" stop-color="#36b5aa"/><stop offset="1" stop-color="#3cc0b3"/></linearGradient>
</defs>
<path d="M379.7 243 H408 L377 274.7 H348.7 Z" fill="url(#hatch)"/>
<path d="M372.2 289.1 L401.3 261.6" stroke="#555a8c" stroke-width="2"/>
<g font-size="20" font-weight="bold" fill="#111" stroke="#111" stroke-width="0.3"><text x="421.5" y="268.5">准</text><text x="467.5" y="268.5">备</text><text x="513.5" y="268.5">流</text><text x="558.5" y="268.5">程</text></g>
<path d="M1198 243 H1240 V284 Z" fill="url(#teal)"/>
<g fill="none" stroke="#3d5a78" stroke-width="1">
<path d="M447 525 A291.78 291.78 0 0 1 884 382.5"/>
<path d="M405.0 739.7 L415.0 729.3 L425.0 719.3 L435.0 709.7 L445.0 700.5 L455.0 691.6 L465.0 683.1 L475.0 674.8 L485.0 667.0 L495.0 659.4 L505.0 652.1 L515.0 645.1 L525.0 638.5 L535.0 632.1 L545.0 625.9 L555.0 620.1 L565.0 614.5 L575.0 609.1 L585.0 604.0 L595.0 599.2 L605.0 594.6 L615.0 590.2 L625.0 586.0 L635.0 582.0 L645.0 578.3 L655.0 574.7 L665.0 571.4 L675.0 568.2 L685.0 565.2 L695.0 562.4 L705.0 559.8 L715.0 557.4 L725.0 555.1 L735.0 553.0 L745.0 551.1 L755.0 549.3 L765.0 547.7 L775.0 546.3 L785.0 545.0 L795.0 543.8 L805.0 542.8 L815.0 541.9 L825.0 541.2 L835.0 540.6 L845.0 540.1 L855.0 539.8 L865.0 539.6 L875.0 539.6 L885.0 539.7 L895.0 539.9 L905.0 540.2 L915.0 540.7 L925.0 541.3 L935.0 542.1 L945.0 543.0 L955.0 544.0 L965.0 545.1 L975.0 546.4 L985.0 547.8 L995.0 549.4 L1005.0 551.1 L1015.0 552.9 L1025.0 554.9 L1035.0 557.0 L1045.0 559.3 L1055.0 561.7 L1065.0 564.3 L1075.0 567.0 L1085.0 569.9 L1095.0 573.0 L1105.0 576.2 L1115.0 579.6 L1125.0 583.1 L1135.0 586.9 L1145.0 590.8 L1155.0 594.9 L1165.0 599.2 L1175.0 603.7 L1185.0 608.4 L1195.0 613.3 L1194.9 612.8"/>
</g>
<g fill="none" stroke="#2f4b6b" stroke-width="2" stroke-linecap="round" stroke-linejoin="round">
<path d="M884 382.5 L905.5 349 M898.5 351.5 L906 348 L905.8 356"/>
<path d="M1195 612.8 L1236 553 M1228.5 556 L1236.5 552 L1236.2 560.5"/>
</g>
<g transform="translate(543 438) rotate(-33)" font-size="12" fill="#707070"><text x="0" y="0">例如QQ群，短信</text></g>
<g transform="translate(780 369) rotate(21)" font-size="12" fill="#707070"><text x="0" y="0">电脑（镜头不好，</text><text x="0" y="15">可以买外置摄像头）</text><text x="0" y="30">和手机（第二机位）</text></g>
<g transform="translate(685 493) rotate(-10.5)" font-size="11.8" fill="#707070"><text x="0" y="0">知道基本的英文专</text><text x="0" y="14">业名词</text></g>
<g transform="translate(1059.5 507) rotate(15)" font-size="11" fill="#707070"><text x="0" y="0">3选2或者5选3</text></g>
<g transform="translate(539 666) rotate(-31)" font-size="12" fill="#707070"><text x="0" y="0">英文（大家没事对</text><text x="0" y="14">着同学练一练。老</text><text x="0" y="28">师们不可怕的，只</text><text x="0" y="42">是年龄比你们大）</text></g>
<g transform="translate(888 593) rotate(3)" font-size="12" fill="#707070"><text x="0" y="0">&#160;一般以抽题的形式</text><text x="0" y="11">体现</text></g>
<g transform="translate(567 382) rotate(-36)"><path d="M-26 -10 H-9 L0 -22 L9 -10 H26 V10 H-26Z" fill="#4b4f80"/>
<text x="0" y="1" font-size="11" fill="#fff" text-anchor="middle" dominant-baseline="central">1</text></g>
<g transform="translate(837.5 359) rotate(20)"><path d="M-26 -10 H-9 L0 -22 L9 -10 H26 V10 H-26Z" fill="#4b4f80"/>
<text x="0" y="1" font-size="11" fill="#fff" text-anchor="middle" dominant-baseline="central">2</text></g>
<g transform="translate(558.4 616.3) rotate(-30)"><path d="M-26 -10 H-9 L0 -22 L9 -10 H26 V10 H-26Z" fill="#4b4f80"/>
<text x="0" y="1" font-size="11" fill="#fff" text-anchor="middle" dominant-baseline="central">2012</text></g>
<g transform="translate(748 549) rotate(170.6)"><path d="M-26 -10 H-9 L0 -22 L9 -10 H26 V10 H-26Z" fill="#4b4f80"/>
<text x="0" y="1" font-size="11" fill="#fff" text-anchor="middle" dominant-baseline="central">2013</text></g>
<g transform="translate(926.8 545) rotate(3)"><path d="M-26 -10 H-9 L0 -22 L9 -10 H26 V10 H-26Z" fill="#4b4f80"/>
<text x="0" y="1" font-size="11" fill="#fff" text-anchor="middle" dominant-baseline="central">2014</text></g>
<g transform="translate(1096.3 568.6) rotate(196)"><path d="M-26 -10 H-9 L0 -22 L9 -10 H26 V10 H-26Z" fill="#4b4f80"/>
<text x="0" y="1" font-size="11" fill="#fff" text-anchor="middle" dominant-baseline="central">2015</text></g>
<g><circle cx="520.6" cy="347.6" r="31" fill="#2a2418" opacity="0.62" filter="url(#blur)"/>
<circle cx="532.6" cy="331.6" r="32.5" fill="#fdfdfd"/><circle cx="532.6" cy="331.6" r="31" fill="url(#cg)"/>
<text x="532.6" y="331.6" transform="rotate(-37 532.6 331.6)" font-size="16" fill="#111" text-anchor="middle" dominant-baseline="central">关注学校信息</text></g>
<g><circle cx="841.7" cy="316.0" r="31" fill="#2a2418" opacity="0.62" filter="url(#blur)"/>
<circle cx="853.7" cy="300" r="32.5" fill="#fdfdfd"/><circle cx="853.7" cy="300" r="31" fill="url(#cg)"/>
<text x="853.7" y="300" transform="rotate(20 853.7 300)" font-size="16" fill="#111" text-anchor="middle" dominant-baseline="central">调试设备</text></g>
<g><circle cx="512.0" cy="581.0" r="31" fill="#2a2418" opacity="0.62" filter="url(#blur)"/>
<circle cx="524" cy="565" r="32.5" fill="#fdfdfd"/><circle cx="524" cy="565" r="31" fill="url(#cg)"/>
<text x="524" y="565" transform="rotate(-32 524 565)" font-size="16" fill="#111" text-anchor="middle" dominant-baseline="central">自我介绍</text></g>
<g><circle cx="759.0" cy="620.5" r="31" fill="#2a2418" opacity="0.62" filter="url(#blur)"/>
<circle cx="771" cy="604.5" r="32.5" fill="#fdfdfd"/><circle cx="771" cy="604.5" r="31" fill="url(#cg)"/>
<text x="771" y="604.5" transform="rotate(-9 771 604.5)" font-size="16" fill="#111" text-anchor="middle" dominant-baseline="central">专业名词</text></g>
<g><circle cx="909.7" cy="499.5" r="31" fill="#2a2418" opacity="0.62" filter="url(#blur)"/>
<circle cx="921.7" cy="483.5" r="32.5" fill="#fdfdfd"/><circle cx="921.7" cy="483.5" r="31" fill="url(#cg)"/>
<text x="921.7" y="483.5" transform="rotate(7 921.7 483.5)" font-size="16" fill="#111" text-anchor="middle" dominant-baseline="central">专业课</text></g>
<g><circle cx="1075.2" cy="642.0" r="31" fill="#2a2418" opacity="0.62" filter="url(#blur)"/>
<circle cx="1087.2" cy="626" r="32.5" fill="#fdfdfd"/><circle cx="1087.2" cy="626" r="31" fill="url(#cg)"/>
<text x="1087.2" y="626" transform="rotate(15 1087.2 626)" font-size="16" fill="#111" text-anchor="middle" dominant-baseline="central">政治</text></g>
<path d="M858 393.5 H866 M862 393.5 V413 M858 413 H866" stroke="#111" stroke-width="1.3" fill="none"/>
</svg></div>
<div class="a" style="left:330px;top:0px;width:1px;height:492px;background:#d0cec8"></div>
<!-- notes -->
<div class="a" style="left:159px;top:492px;width:1281px;height:2px;background:#d6d6d6"></div>
<div class="t" style="left:171px;top:503px;font-size:17px;color:#555">单击此处添加备注</div>
</div>
<!-- STATUS -->
<div id="status" class="a">
<div class="t" style="left:8px;top:5px;font-size:13.5px;color:#444">幻灯片 第 4 张，共 10 张</div>
<svg class="a" style="left:178px;top:4px" width="20" height="16" fill="none" stroke="#777" stroke-width="1"><path d="M3.5 2.5h7v11h-7zM10.5 2.5h3M10.5 13.5h3M13 6l4 4M17 6l-4 4"/></svg>
<div class="t" style="left:214px;top:5px;font-size:13.5px;color:#444">中文(中国)</div>
<svg class="a" style="left:294px;top:4px" width="20" height="18" fill="none" stroke="#555" stroke-width="1.2"><path d="M12 3a6 6 0 1 0-4 11"/><path d="M5 6l4 2v5M9 8l3-1"/><path d="M11 11l6 6M17 11l-6 6" stroke-width="1.6"/></svg>
<div class="t" style="left:315px;top:5px;font-size:13.5px;color:#444">辅助功能: 调查</div>
<svg class="a" style="left:900px;top:5px" width="16" height="16" fill="none" stroke="#555" stroke-width="1"><path d="M3 9h11M3 12h11M3 15h11M5 6l3.5-3 3.5 3"/></svg>
<div class="t" style="left:921px;top:5px;font-size:13.5px;color:#444">备注</div>
<svg class="a" style="left:968px;top:5px" width="18" height="16"><path d="M1 1h16v10H7l-4 4v-4H1z" fill="#555"/></svg>
<div class="t" style="left:988px;top:5px;font-size:13.5px;color:#444">批注</div>
<div class="a" style="left:1036px;top:0;width:45px;height:24px;background:#cdcdcd"></div>
<svg class="a" style="left:1036px;top:0" width="180" height="24" fill="none" stroke="#777" stroke-width="1">
<rect x="14.5" y="5.5" width="15" height="13"/><rect x="18.5" y="8.5" width="8" height="7"/><path d="M16.5 8v7"/>
<rect x="59.5" y="6.5" width="6" height="5"/><rect x="68.5" y="6.5" width="6" height="5"/><rect x="59.5" y="14.5" width="6" height="5"/><rect x="68.5" y="14.5" width="6" height="5"/>
<path d="M103.5 6.5h7v13h-7zM110.5 6.5h7v13h-7zM105 9h4M105 12h4M105 15h4M112 9h4M112 12h4M112 15h4"/>
<path d="M147.5 6.5h17M149.5 6.5v8h13v-8M156 14.5v4M152 20h8"/>
</svg>
<svg class="a" style="left:1216px;top:0" width="224" height="24" fill="none" stroke="#666" stroke-width="1">
<path d="M6 12.5h7M137 12.5h9M141.5 8v9"/><path d="M21 12.5h111M76 9v7" stroke="#555" stroke-width="1.6"/>
<rect x="51" y="6" width="6" height="13" fill="#666" stroke="none"/>
<path d="M204.5 6.5h12v12h-12zM207 9h3v3M214 16h-3v-3M214 9h-3v3M207 16h3v-3" stroke="#777"/>
</svg>
<div class="t" style="left:1376px;top:5px;font-size:14px;color:#444">64%</div>
</div>
<div class="a" style="left:0;top:831px;width:1440px;height:3px;background:linear-gradient(90deg,#5d88d8 0,#5d88d8 577px,#8a7050 577px,#8a7050 648px,#f2c4a8 648px,#f2c4a8 710px,#86694a 710px,#86694a 912px,#e8825a 912px,#e8825a 1050px,#f1dc9a 1050px,#f1dc9a 1205px,#8a6a45 1205px,#8a6a45 1388px,#f0c030 1388px)"></div>
<!-- ZOOM PANEL -->
<div class="a" style="left:1239px;top:81px;width:201px;height:721px;background:#0d0e10;border-bottom-left-radius:6px;overflow:hidden">
 <div class="a" style="left:0;top:0;width:201px;height:36px;background:#393d41"></div>
 <svg class="a" style="left:0;top:0" width="201" height="36">
  <rect x="14.5" y="11" width="6" height="10" rx="3" fill="#979ba0"/>
  <path d="M12.5 17.5a5 5 0 0 0 10 0M17.5 22.5v2.5M14.5 25h6" stroke="#979ba0" stroke-width="1.3" fill="none"/>
  <path d="M34.5 5v27" stroke="#26292c" stroke-width="1"/>
  <path d="M192 20l12-12 12 12-12 12z" fill="#55595d"/>
 </svg>
 <div class="t" style="left:46px;top:12px;font-size:12.5px;color:#ececec">正在讲话: DarLing;</div>
 <!-- share thumb -->
 <div class="a" style="left:2px;top:38px;width:199px;height:135px;background:#16d66a"></div>
 <div class="a" style="left:4px;top:40px;width:197px;height:131px;background:#f5f1e6;overflow:hidden" id="sharethumb">
  <svg class="a" style="left:0;top:0" width="197" height="131">
   <defs><filter id="sb" x="-50%" y="-50%" width="200%" height="200%"><feDropShadow dx="-1.2" dy="1.8" stdDeviation="1.3" flood-opacity="0.45"/></filter></defs>
   <rect x="0" y="0" width="197" height="13" fill="#b7472a"/>
   <rect x="9" y="8.5" width="9" height="4.5" fill="#f3f3f3"/>
   <g fill="#f0d0c4" opacity="0.8"><rect x="3" y="3" width="6" height="1"/><rect x="90" y="3" width="22" height="1.2"/><rect x="170" y="3" width="20" height="1"/><rect x="22" y="9.5" width="6" height="1.2"/><rect x="35" y="9.5" width="6" height="1.2"/><rect x="47" y="9.5" width="6" height="1.2"/><rect x="60" y="9.5" width="6" height="1.2"/><rect x="72" y="9.5" width="10" height="1.2"/></g>
   <rect x="0" y="13" width="197" height="18" fill="#f3f3f3"/>
   <g fill="#c9c9c9"><rect x="3" y="15" width="4" height="6"/><rect x="18" y="15" width="8" height="5"/><rect x="42" y="16" width="26" height="4"/><rect x="45" y="23" width="30" height="2"/><rect x="128" y="16" width="24" height="11"/><rect x="158" y="15" width="6" height="6"/><rect x="168" y="16" width="18" height="2"/><rect x="168" y="20" width="18" height="2"/><rect x="168" y="24" width="18" height="2"/></g>
   <rect x="0" y="31" width="53" height="83" fill="#e6e6e6"/>
   <rect x="21.3" y="31" width="2.7" height="80" fill="#fff"/>
   <rect x="4.6" y="34.3" width="12.4" height="7" fill="#f3ebe0"/><rect x="4.6" y="44.9" width="12.4" height="7" fill="#f3ebe0"/><rect x="4.6" y="55.5" width="12.4" height="7" fill="#f3ebe0"/><rect x="4.6" y="66.1" width="12.4" height="7" fill="#f3ebe0"/><rect x="4.6" y="76.7" width="12.4" height="7" fill="#f3ebe0"/><rect x="4.6" y="87.3" width="12.4" height="7" fill="#f3ebe0"/><rect x="4.6" y="97.9" width="12.4" height="7" fill="#f3ebe0"/>
   <rect x="4.1" y="65.6" width="13.4" height="8" fill="#f5f1e6" stroke="#7a1616" stroke-width="1"/>
   <rect x="0" y="114" width="197" height="17" fill="#e6e6e6"/>
   <path d="M60 33l5-5h4l-5 5z" fill="#9fdacd"/>
   <g fill="#222"><rect x="73" y="33" width="2" height="2"/><rect x="81" y="33" width="2" height="2"/><rect x="89" y="33" width="2" height="2"/><rect x="96" y="33" width="2" height="2"/></g>
   <g stroke="#56708a" stroke-width="0.7" fill="none" stroke-dasharray="2.5 2"><path d="M72.6 78.5 Q100 40 146.4 54.3"/><path d="M66.5 113.6 Q110 75 199 93"/></g>
   <g fill="#f8f8f8" filter="url(#sb)"><circle cx="87.0" cy="45.8" r="5.4"/><circle cx="141.3" cy="40.4" r="5.4"/><circle cx="152.8" cy="71.4" r="5.4"/><circle cx="85.6" cy="85.2" r="5.4"/><circle cx="127.3" cy="91.9" r="5.4"/><circle cx="180.7" cy="95.5" r="5.4"/></g>
   <g fill="#4b4f80"><rect x="-4.4" y="-1.7" width="8.8" height="3.4" transform="translate(92.9 54.3) rotate(-36)"/><rect x="-4.4" y="-1.7" width="8.8" height="3.4" transform="translate(138.3 50.1) rotate(20)"/><rect x="-4.4" y="-1.7" width="8.8" height="3.4" transform="translate(91.3 93.8) rotate(-30)"/><rect x="-4.4" y="-1.7" width="8.8" height="3.4" transform="translate(123.4 82.5) rotate(170)"/><rect x="-4.4" y="-1.7" width="8.8" height="3.4" transform="translate(153.7 81.8) rotate(3)"/><rect x="-4.4" y="-1.7" width="8.8" height="3.4" transform="translate(182.3 85.9) rotate(196)"/></g>
   <g fill="#999" opacity="0.45"><rect x="89" y="57" width="9" height="2" transform="rotate(-35 93 58)"/><rect x="128" y="58" width="10" height="5" transform="rotate(20 133 60)"/><rect x="112" y="72" width="13" height="2.5" transform="rotate(-10 118 73)"/><rect x="177" y="75" width="10" height="2" transform="rotate(14 182 76)"/><rect x="88" y="100" width="11" height="8" transform="rotate(-32 93 104)"/><rect x="145" y="91" width="15" height="2.5"/></g>
   <rect x="82" y="8.2" width="71" height="19" rx="2" fill="#5e5e5e" opacity="0.72"/>
   <path d="M111 20l6.5-6 6.5 6" stroke="#fff" stroke-width="1.8" fill="none"/>
   <rect x="0" y="109" width="151.5" height="22" fill="#3c3c3c" opacity="0.9"/>
  </svg>
  <svg class="a" style="left:2px;top:112px" width="36" height="18"><rect x="1" y="2" width="13" height="10" rx="1.5" fill="#fff"/><path d="M4 10c1-3 3-4 6-4M8 4l2.5 2-2.5 2" stroke="#444" stroke-width="1.2" fill="none"/><rect x="3" y="14" width="9" height="3" rx="1" fill="#fff"/><rect x="21" y="1" width="6" height="10" rx="3" fill="#27e06e"/><path d="M19 8a5 5 0 0 0 10 0M24 13v3" stroke="#fff" stroke-width="1.3" fill="none"/></svg>
  <div class="t" style="left:39px;top:114px;font-size:12.5px;color:#f4f4f4">DarLing的屏幕共享</div>
 </div>
 <!-- tiles -->
 <div class="a" style="left:2px;top:175px;width:199px;height:135px;background:#2e3134"></div>
 <div class="a" style="left:2px;top:312px;width:199px;height:135px;background:#2e3134"></div>
 <div class="a" style="left:2px;top:449px;width:199px;height:135px;background:#2e3134"></div>
 <div class="a" style="left:2px;top:586px;width:199px;height:135px;background:#2e3134;border-bottom-left-radius:5px"></div>
 <!-- avatars -->
 <svg class="a" style="left:87px;top:200px" width="70" height="70" viewBox="0 0 70 70"><defs><clipPath id="cc"><circle cx="35" cy="35" r="35"/></clipPath><filter id="bl"><feGaussianBlur stdDeviation="1.3"/></filter></defs>
<g clip-path="url(#cc)"><rect width="70" height="70" fill="#d6dade"/><g filter="url(#bl)">
<rect x="0" y="0" width="70" height="25" fill="#dfe3e8"/><rect x="36" y="0" width="8" height="30" fill="#c9d2d6"/>
<rect x="58" y="8" width="14" height="18" fill="#a11a28"/><rect x="57" y="25" width="14" height="30" fill="#8c8893"/><ellipse cx="64" cy="50" rx="6" ry="8" fill="#e6e6e6"/>
<ellipse cx="6" cy="27" rx="7" ry="4" fill="#d03232"/><rect x="0" y="33" width="18" height="30" fill="#d6c7bb"/>
<ellipse cx="24" cy="10" rx="4.5" ry="10" fill="#d9b2a0" transform="rotate(-20 24 10)"/><ellipse cx="43" cy="12" rx="4" ry="8" fill="#d9b2a0"/>
<ellipse cx="32" cy="32" rx="18" ry="17" fill="#dd7a5e"/>
<ellipse cx="34" cy="39" rx="13" ry="15" fill="#e2a688"/><ellipse cx="36.5" cy="46" rx="4" ry="2" fill="#9e2a28"/>
<ellipse cx="32" cy="56" rx="18" ry="7" fill="#d9a286"/><path d="M22 68l40-16 8 18h-48z" fill="#c9d0d4"/>
</g></g></svg>
 <svg class="a" style="left:87px;top:337px" width="70" height="70" viewBox="0 0 70 70"><g clip-path="url(#cc)"><rect width="70" height="70" fill="#fbfbfa"/><g filter="url(#bl2)">
<ellipse cx="37.8" cy="10.5" rx="11.5" ry="9.5" fill="#b9773c"/><ellipse cx="37.8" cy="16" rx="7" ry="6" fill="#f4f1ec"/>
<circle cx="34.7" cy="13.8" r="1.3" fill="#3b5d78"/><circle cx="42.7" cy="14.2" r="1.3" fill="#3b5d78"/>
<path d="M25 20h26l2 22h-30z" fill="#f3f1ee"/><ellipse cx="26" cy="28" rx="5" ry="7" fill="#a8723f"/><ellipse cx="46" cy="27" rx="4" ry="5" fill="#a8723f"/>
<ellipse cx="14.5" cy="36" rx="3" ry="4" fill="#6f8a94"/>
<rect x="31.5" y="40" width="14" height="14" fill="#7d9298"/>
<ellipse cx="24" cy="43" rx="7.5" ry="5.5" fill="#e1a660"/><rect x="16.5" y="45" width="15" height="19" rx="4" fill="#e9dcc0"/>
<ellipse cx="51" cy="47" rx="8" ry="6" fill="#9c9c98"/><rect x="42" y="48" width="16" height="16" rx="4" fill="#b7bcba"/>
</g></g><defs><filter id="bl2"><feGaussianBlur stdDeviation="0.7"/></filter></defs></svg>
 <div class="a" style="left:87px;top:474px;width:70px;height:70px;border-radius:50%;background:#2166fa"></div>
 <div class="t" style="left:107px;top:495px;font-size:30px;color:#fff">李</div>
 <svg class="a" style="left:87px;top:611px" width="70" height="70" viewBox="0 0 70 70"><g clip-path="url(#cc)"><rect width="70" height="70" fill="#a8303a"/><g filter="url(#bl)">
<rect x="0" y="0" width="30" height="70" fill="#6e5556"/><rect x="8" y="2" width="16" height="18" fill="#4d5478"/><rect x="56" y="8" width="14" height="56" fill="#c8303a"/>
<path d="M10 28c0-18 12-27 28-27s25 10 24 24c-4 0-8-2-12-4-8 6-20 4-26 2-4 4-6 12-6 18-4-2-8-6-8-13z" fill="#3a2826"/>
<ellipse cx="31" cy="45" rx="13" ry="19" fill="#e4b2a6"/><ellipse cx="27" cy="50" rx="5" ry="4" fill="#e08c8c" opacity="0.6"/>
<path d="M25 34h8" stroke="#8a6a80" stroke-width="1.2"/>
<ellipse cx="36.5" cy="51.5" rx="5" ry="3.5" fill="#c41a2a"/>
<path d="M44 20c6-2 12 2 14 10l2 22c0 6-4 8-8 8l-8-2z" fill="#e9beb0"/>
<path d="M2 52l14-4 6 10-6 12h-16z" fill="#c8202c"/><rect x="20" y="60" width="32" height="10" fill="#dcaa9c"/>
</g></g></svg>
 <!-- chevron -->
 <div class="a" style="left:87px;top:691px;width:71px;height:20px;background:#25282b;border-radius:2px"></div>
 <svg class="a" style="left:87px;top:691px" width="71" height="20"><path d="M31 8l4.5 4 4.5-4" stroke="#fff" stroke-width="1.5" fill="none"/></svg>
 <!-- name labels -->
 <div class="a" style="left:2px;top:286px;width:86px;height:24px;background:#17191b"></div>
 <div class="a" style="left:2px;top:288px;width:20px;height:20px;background:#ff7a00"></div>
 <div class="a" style="left:2px;top:423px;width:84px;height:24px;background:#17191b"></div>
 <div class="a" style="left:2px;top:425px;width:20px;height:20px;background:#2166fa"></div>
 <div class="a" style="left:2px;top:560px;width:43px;height:24px;background:#17191b"></div>
 <div class="a" style="left:2px;top:697px;width:90px;height:24px;background:#17191b"></div>
 <svg class="a" style="left:2px;top:286px" width="40" height="24"><circle cx="10" cy="9" r="3.2" fill="#fff"/><path d="M3.5 19.5c0-4 3-6 6.5-6s6.5 2 6.5 6z" fill="#fff"/><rect x="27" y="6" width="6" height="9" rx="3" fill="#fff"/><path d="M24.5 12a5.5 5.5 0 0 0 11 0M30 17.5v2" stroke="#fff" stroke-width="1.3" fill="none"/></svg>
 <svg class="a" style="left:2px;top:423px" width="40" height="24"><circle cx="10" cy="9" r="3.2" fill="#fff"/><path d="M3.5 19.5c0-4 3-6 6.5-6s6.5 2 6.5 6z" fill="#fff"/><rect x="27" y="6" width="6" height="9" rx="3" fill="#fff"/><path d="M24.5 12a5.5 5.5 0 0 0 11 0M30 17.5v2" stroke="#fff" stroke-width="1.3" fill="none"/><path d="M24 19l12-13" stroke="#e23b3b" stroke-width="1.3"/></svg>
 <svg class="a" style="left:2px;top:560px" width="24" height="24"><rect x="9" y="6" width="6" height="9" rx="3" fill="#fff"/><path d="M6.5 12a5.5 5.5 0 0 0 11 0M12 17.5v2" stroke="#fff" stroke-width="1.3" fill="none"/><path d="M6 19l12-13" stroke="#e23b3b" stroke-width="1.3"/></svg>
 <svg class="a" style="left:2px;top:697px" width="24" height="24"><rect x="9" y="6" width="6" height="9" rx="3" fill="#fff"/><path d="M6.5 12a5.5 5.5 0 0 0 11 0M12 17.5v2" stroke="#fff" stroke-width="1.3" fill="none"/><path d="M6 19l12-13" stroke="#e23b3b" stroke-width="1.3"/></svg>
 <div class="t" style="left:47px;top:292px;font-size:12.5px;color:#fff">叶桥键</div>
 <div class="t" style="left:47px;top:429px;font-size:12.5px;color:#fff">海涛</div>
 <div class="t" style="left:27px;top:566px;font-size:12.5px;color:#fff">李</div>
 <div class="t" style="left:27px;top:703px;font-size:12.5px;color:#fff">管工燕亭臻</div>
</div>
<!-- bottom share label -->
<div class="a" style="left:0;top:876px;width:153px;height:24px;background:#17191b"></div>
<svg class="a" style="left:4px;top:879px" width="36" height="18"><rect x="1" y="2" width="13" height="10" rx="1.5" fill="#fff"/><path d="M4 10c1-3 3-4 6-4M8 4l2.5 2-2.5 2" stroke="#333" stroke-width="1.2" fill="none"/><rect x="3" y="14" width="9" height="3" rx="1" fill="#fff"/><rect x="24" y="1" width="6" height="10" rx="3" fill="#27e06e"/><path d="M22 8a5 5 0 0 0 10 0M27 13v3" stroke="#fff" stroke-width="1.3" fill="none"/></svg>
<div class="t" style="left:43px;top:882px;font-size:12px;font-weight:bold;color:#fff">DarLing的屏幕共享</div>
</body></html>
